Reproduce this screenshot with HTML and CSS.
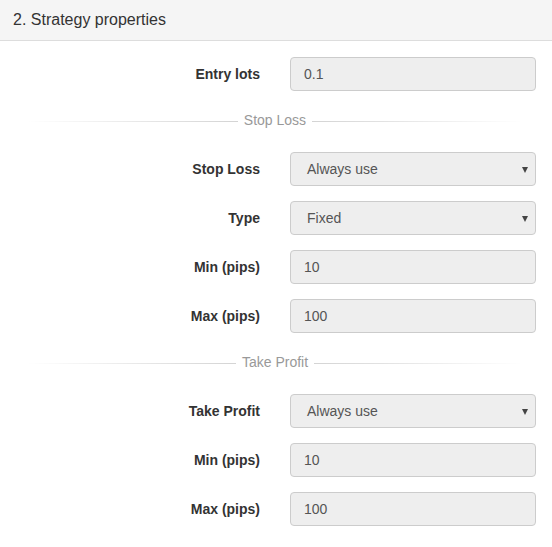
FILE: index.html
```html
<!DOCTYPE html>
<html>
<head>
<meta charset="utf-8">
<link rel="stylesheet" href="styles.css">
</head>
<body>
<div class="panel">
  <div class="panel-heading">2. Strategy properties</div>
  <div class="panel-body">
    <div class="form-row">
      <div class="label">Entry lots</div>
      <div class="control">0.1</div>
    </div>

    <div class="divider"><span class="divider-text">Stop Loss</span></div>

    <div class="form-row">
      <div class="label">Stop Loss</div>
      <div class="control select"><span>Always use</span><span class="caret"></span></div>
    </div>
    <div class="form-row">
      <div class="label">Type</div>
      <div class="control select"><span>Fixed</span><span class="caret"></span></div>
    </div>
    <div class="form-row">
      <div class="label">Min (pips)</div>
      <div class="control">10</div>
    </div>
    <div class="form-row">
      <div class="label">Max (pips)</div>
      <div class="control">100</div>
    </div>

    <div class="divider"><span class="divider-text">Take Profit</span></div>

    <div class="form-row">
      <div class="label">Take Profit</div>
      <div class="control select"><span>Always use</span><span class="caret"></span></div>
    </div>
    <div class="form-row">
      <div class="label">Min (pips)</div>
      <div class="control">10</div>
    </div>
    <div class="form-row">
      <div class="label">Max (pips)</div>
      <div class="control">100</div>
    </div>
  </div>
</div>
</body>
</html>
```

FILE: styles.css
```css
* { box-sizing: border-box; }
html, body {
  margin: 0;
  padding: 0;
  background: #fff;
}
body {
  font-family: "Liberation Sans", Arial, sans-serif;
  font-size: 14px;
  color: #333;
}
.panel {
  width: 552px;
}
.panel-heading {
  height: 41px;
  padding: 10px 13px 0;
  background: #f5f5f5;
  border-bottom: 1px solid #dddddd;
  font-size: 16px;
  line-height: 19px;
  color: #333;
}
.panel-body {
  padding: 16px 16px 0 14px;
}
.form-row {
  display: grid;
  grid-template-columns: 1fr 1fr;
  column-gap: 30px;
  align-items: center;
  margin-bottom: 15px;
}
.label {
  text-align: right;
  font-weight: bold;
  color: #333;
}
.control {
  height: 34px;
  padding: 0 12px 0 13px;
  display: flex;
  align-items: center;
  background: #eeeeee;
  border: 1px solid #cccccc;
  border-radius: 4px;
  color: #555;
  line-height: 20px;
}
.control.select {
  justify-content: space-between;
  padding: 0 7px 0 16px;
}
.caret {
  width: 0;
  height: 0;
  border-left: 3px solid transparent;
  border-right: 3px solid transparent;
  border-top: 6px solid #444;
  margin-top: 1px;
}
.divider {
  height: 31px;
  margin: 0 13px 15px 13px;
  padding-bottom: 3px;
  display: flex;
  align-items: center;
  justify-content: center;
  background-image: linear-gradient(to right, rgba(0,0,0,0), rgba(0,0,0,0.2) 50%, rgba(0,0,0,0));
  background-size: 100% 1px;
  background-repeat: no-repeat;
  background-position: 0 15px;
}
.divider-text {
  background: #fff;
  padding: 0 6px;
  color: #999;
  line-height: 18px;
}
```
